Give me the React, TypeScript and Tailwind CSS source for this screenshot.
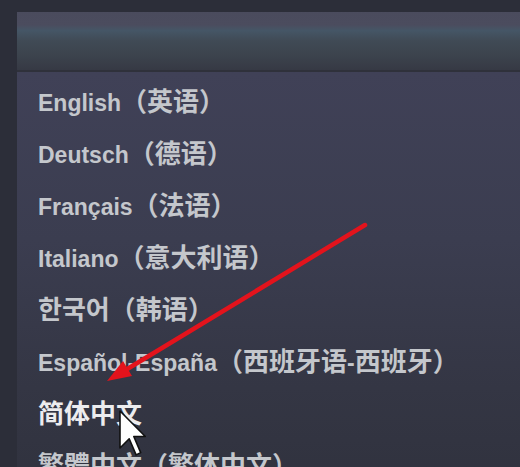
const languages = [
  { label: "English（英语）" },
  { label: "Deutsch（德语）" },
  { label: "Français（法语）" },
  { label: "Italiano（意大利语）" },
  { label: "한국어（韩语）" },
  { label: "Español-España（西班牙语-西班牙）" },
  { label: "简体中文", active: true },
  { label: "繁體中文（繁体中文）" },
];

// CJK / Hangul / fullwidth runs are drawn a little larger than the latin text
const cjkRun = /([\u3000-\u9fff\uac00-\ud7af\uff00-\uffef]+)/;

const Label = ({ text }: { text: string }) => (
  <>
    {text.split(cjkRun).map((part, i) =>
      cjkRun.test(part) ? (
        <span key={i} className="text-[26px]">
          {part}
        </span>
      ) : (
        <span key={i}>{part}</span>
      )
    )}
  </>
);

const App = () => {
  return (
    <div className="relative flex h-[467px] w-[520px] flex-col overflow-hidden bg-[#2c2e39] pl-[17px] pt-[12px] font-['Liberation_Sans','Noto_Sans_CJK_SC','Noto_Sans_CJK_KR',sans-serif]">
      <div className="flex flex-1 flex-col">
        <div className="h-[58px] bg-[linear-gradient(to_bottom,#4a4b5d_0%,#4b4c5e_22%,#455666_32%,#404a55_50%,#3c434d_75%,#363944_100%)]" />
        <div className="h-[2px] bg-[#2f313b]" />
        <ul className="flex-1 bg-[linear-gradient(to_bottom,#404157_0%,#3b3d50_40%,#343644_75%,#30323e_100%)] pl-[21px] pt-[4px]">
          {languages.map((lang) => (
            <li
              key={lang.label}
              className={`h-[52px] whitespace-nowrap text-[23px] font-bold leading-[52px] ${
                lang.active ? "text-[#ececee]" : "text-[#c4c7cc]"
              }`}
            >
              <Label text={lang.label} />
            </li>
          ))}
        </ul>
      </div>

      {/* red annotation arrow + mouse pointer drawn over the list */}
      <svg
        className="pointer-events-none absolute left-0 top-0"
        width="520"
        height="467"
        viewBox="0 0 520 467"
      >
        <line
          x1="365"
          y1="225"
          x2="124"
          y2="371"
          stroke="#e3131c"
          strokeWidth="4.5"
          strokeLinecap="round"
        />
        <polygon points="107,381 123,361 132,376" fill="#e3131c" />
        <path
          d="M120 411 L120 448 L129.2 438.8 L136.1 454.9 L140.7 452.6 L133.8 436.5 L145.3 436.5 Z"
          fill="#ffffff"
          stroke="#111111"
          strokeWidth="1.6"
          strokeLinejoin="round"
        />
      </svg>
    </div>
  );
};

export default App;
